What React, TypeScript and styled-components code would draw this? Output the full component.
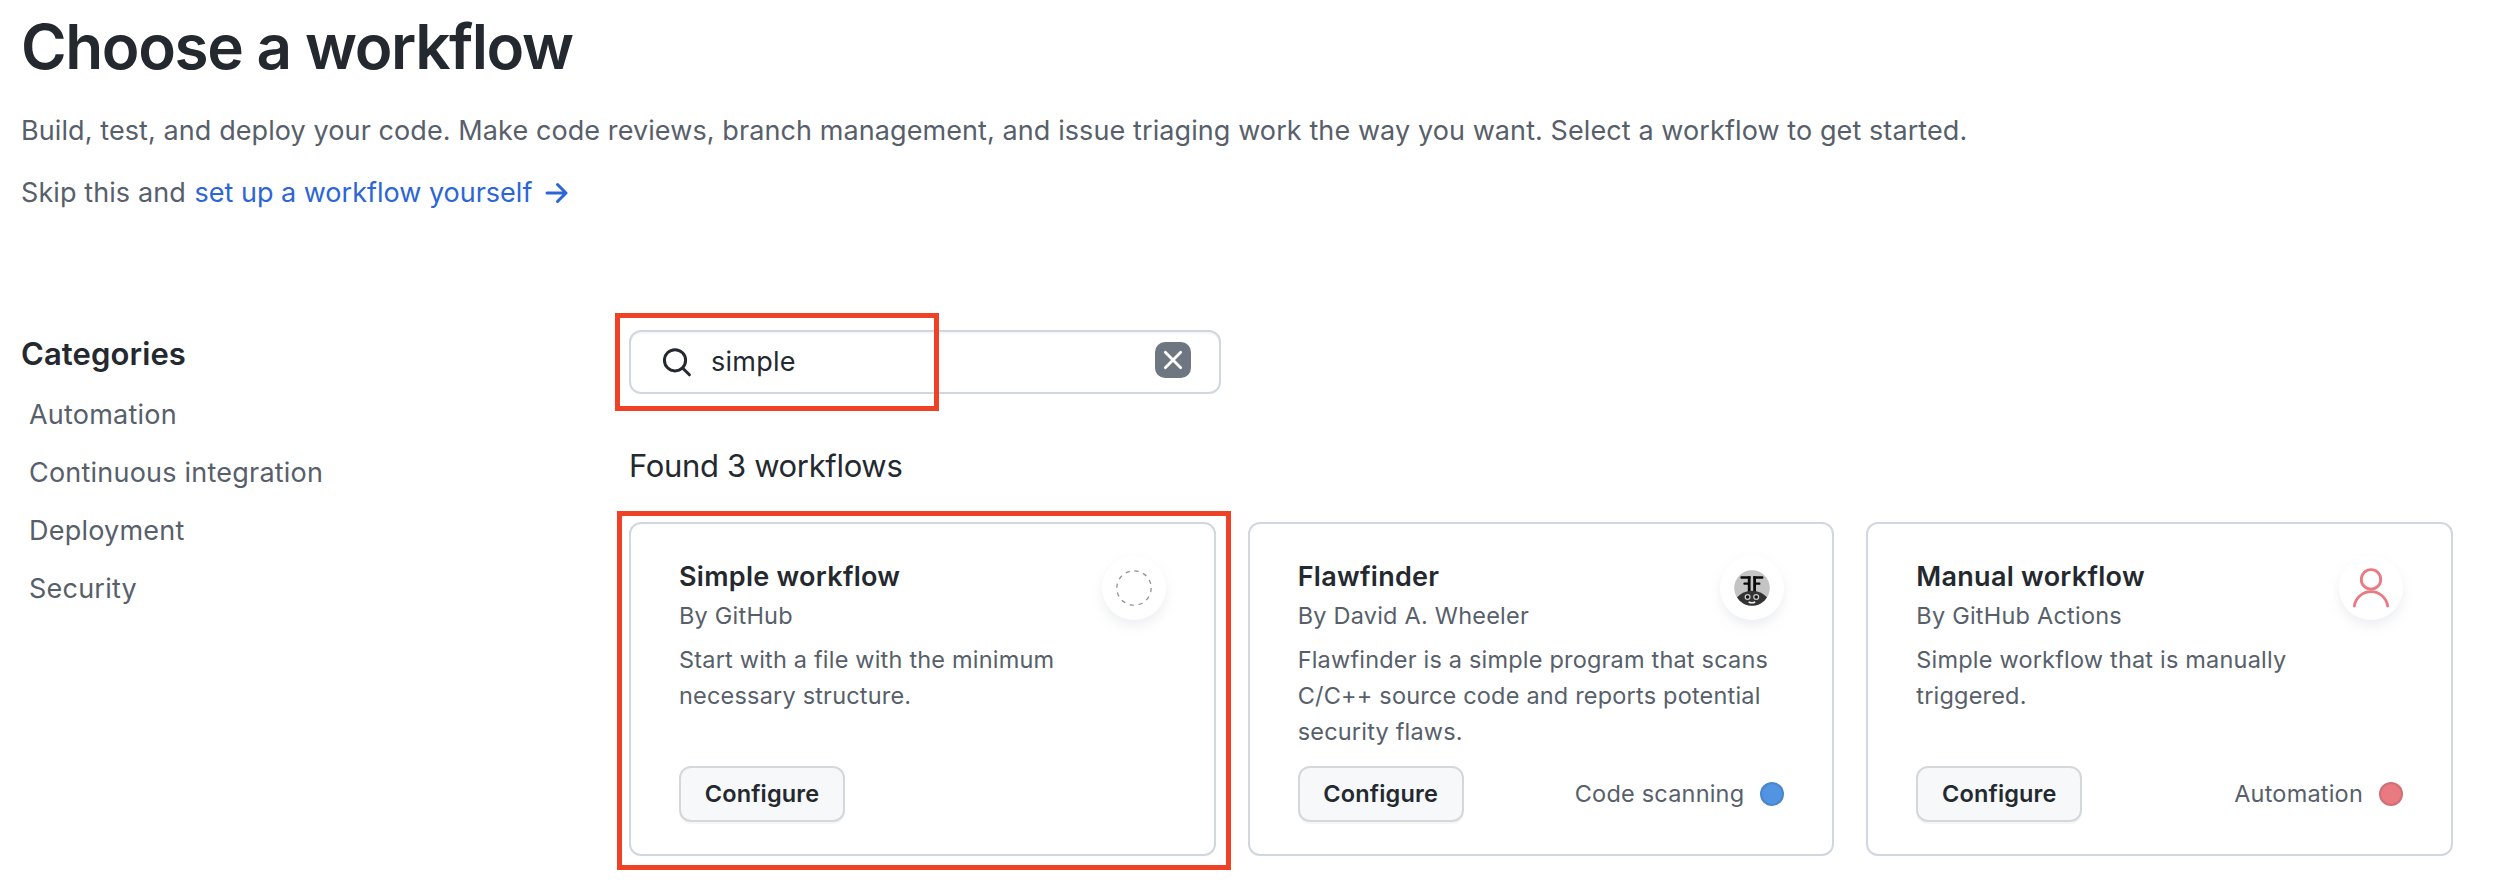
import React from "react";
import styled, { createGlobalStyle } from "styled-components";

const GlobalStyle = createGlobalStyle`
  *, *::before, *::after { box-sizing: border-box; }
  body {
    margin: 0;
    background: #ffffff;
    color: #24292f;
    font-family: Inter, "Liberation Sans", sans-serif;
  }
  h1, h2, h3, p, ul { margin: 0; padding: 0; }
`;

const Page = styled.div`
  width: 2514px;
  height: 884px;
  padding: 7px 61px 0 21px;
  overflow: hidden;
`;

const Header = styled.header`
  display: flex;
  flex-direction: column;
  height: 323px;
  color: #57606a;
`;

const PageTitle = styled.h1`
  margin-bottom: 23px;
  color: #24292f;
  font-size: 62px;
  font-weight: 600;
  line-height: 80px;
  letter-spacing: -1.41px;
`;

const Lead = styled.p`
  margin-bottom: 20px;
  font-size: 27px;
  line-height: 42px;
  letter-spacing: 0.09px;
  white-space: nowrap;
`;

const SetupLink = styled.a`
  display: inline-flex;
  align-items: center;
  gap: 13px;
  margin-left: 1px;
  color: #2c66d6;
  letter-spacing: 0;
`;

const Columns = styled.div`
  display: grid;
  grid-template-columns: 608px 1fr;
`;

const Sidebar = styled.nav`
  display: flex;
  flex-direction: column;
  gap: 8px;
`;

const SidebarTitle = styled.h2`
  font-size: 31px;
  font-weight: 600;
  line-height: 48px;
  letter-spacing: 0.1px;
`;

const CategoryList = styled.ul`
  list-style: none;
`;

const Category = styled.li`
  padding-left: 8px;
  color: #57606a;
  font-size: 27px;
  line-height: 58px;
  letter-spacing: 0.22px;
`;

const Results = styled.main`
  display: flex;
  flex-direction: column;
`;

const SearchArea = styled.div`
  position: relative;
  width: 592px;
`;

const SearchBox = styled.div`
  display: flex;
  align-items: center;
  height: 64px;
  padding: 0 28px 0 32px;
  border: 2px solid #d0d7de;
  border-radius: 12px;
  box-shadow: inset 0 2px 0 rgba(208, 215, 222, 0.2);
`;

const Query = styled.span`
  flex: 1;
  margin-left: 19px;
  font-size: 27px;
  line-height: 40px;
  letter-spacing: 0.25px;
`;

const ClearButton = styled.button`
  display: flex;
  align-items: center;
  justify-content: center;
  width: 36px;
  height: 36px;
  margin-bottom: 4px;
  padding: 0;
  border: 0;
  border-radius: 10px;
  background: #6e7781;
`;

const Highlight = styled.div<{ $top: number; $right: number; $bottom: number; $left: number }>`
  position: absolute;
  top: ${(p) => p.$top}px;
  right: ${(p) => p.$right}px;
  bottom: ${(p) => p.$bottom}px;
  left: ${(p) => p.$left}px;
  border: 5px solid #ee4126;
  pointer-events: none;
`;

const ResultCount = styled.h2`
  margin: 48px 0 32px;
  font-size: 31px;
  font-weight: 400;
  line-height: 48px;
  letter-spacing: -0.34px;
`;

const CardGrid = styled.div`
  display: grid;
  grid-template-columns: repeat(3, 1fr);
  gap: 32px;
`;

const Card = styled.article`
  position: relative;
  display: flex;
  flex-direction: column;
  height: 334px;
  padding: 32px 48px;
  border: 2px solid #d0d7de;
  border-radius: 12px;
`;

const CardHead = styled.div`
  display: flex;
  justify-content: space-between;
  height: 78px;
  margin-bottom: 8px;
`;

const CardTitle = styled.h3`
  padding-top: 1px;
  font-size: 27px;
  font-weight: 600;
  line-height: 40px;
  letter-spacing: 0.28px;
`;

const Author = styled.p`
  margin-top: 1px;
  color: #57606a;
  font-size: 23.5px;
  line-height: 36px;
  letter-spacing: 0.22px;
`;

const Avatar = styled.div`
  display: flex;
  align-items: center;
  justify-content: center;
  width: 64px;
  height: 64px;
  border-radius: 50%;
  background: #ffffff;
  box-shadow: 0 6px 12px rgba(140, 149, 159, 0.15);
`;

const Description = styled.p`
  width: 474px;
  color: #57606a;
  font-size: 23.5px;
  line-height: 36px;
  letter-spacing: 0.19px;
`;

const CardFooter = styled.div`
  display: flex;
  align-items: center;
  justify-content: space-between;
  margin-top: auto;
`;

const ConfigureButton = styled.button`
  width: 166px;
  height: 56px;
  padding: 0;
  border: 2px solid #d5d8db;
  border-radius: 12px;
  background: #f6f8fa;
  box-shadow: 0 2px 0 rgba(31, 35, 40, 0.04);
  color: #24292f;
  font-family: inherit;
  font-size: 23.5px;
  font-weight: 600;
  line-height: 36px;
  letter-spacing: 0.15px;
`;

const Tag = styled.span`
  display: flex;
  align-items: center;
  gap: 16px;
  color: #57606a;
  font-size: 23.5px;
  line-height: 36px;
  letter-spacing: 0.2px;
`;

const Dot = styled.i<{ $color: string }>`
  width: 24px;
  height: 24px;
  border: 2px solid rgba(27, 31, 36, 0.12);
  border-radius: 50%;
  background: ${(p) => p.$color};
`;

const ArrowIcon = () => (
  <svg width="23" height="22" viewBox="0 0 23 22" fill="none" stroke="currentColor" strokeWidth="3" strokeLinecap="round" strokeLinejoin="round">
    <path d="M2 11H21M12.5 2.5L21 11L12.5 19.5" />
  </svg>
);

const SearchIcon = () => (
  <svg width="29" height="29" viewBox="0 0 29 29" fill="none" stroke="#24292f" strokeWidth="3" strokeLinecap="round">
    <circle cx="12" cy="12.3" r="10.6" />
    <path d="M19.8 20.3L26.4 26.8" />
  </svg>
);

const CloseIcon = () => (
  <svg width="20" height="20" viewBox="0 0 20 20" stroke="#ffffff" strokeWidth="2.8" strokeLinecap="round">
    <path d="M2.3 2.3L17.7 17.7M17.7 2.3L2.3 17.7" />
  </svg>
);

const BlankIcon = () => (
  <svg width="36" height="36" viewBox="0 0 36 36" fill="none" stroke="#8b929a" strokeWidth="1.3">
    <circle cx="18" cy="18" r="17.2" strokeDasharray="4.2 4.8" />
  </svg>
);

const BugIcon = () => (
  <svg width="36" height="36" viewBox="0 0 36 36">
    <defs>
      <clipPath id="bug-disc">
        <circle cx="18" cy="18" r="17.8" />
      </clipPath>
    </defs>
    <g clipPath="url(#bug-disc)">
      <rect width="36" height="36" fill="#c4c4c4" />
      <g fill="#0a0a0a">
        <rect x="6.4" y="6.2" width="10.2" height="2.5" rx="1" />
        <rect x="9.4" y="12.4" width="6" height="2.3" rx="0.8" />
        <rect x="13.8" y="6.2" width="2.8" height="16" />
        <rect x="19.2" y="6.2" width="10.2" height="2.5" rx="1" />
        <rect x="20.4" y="12.4" width="6" height="2.3" rx="0.8" />
        <rect x="19.2" y="6.2" width="2.8" height="16" />
      </g>
      <path d="M3 27.2Q9 20.7 18 20.7T33 27.2L28 36H8Z" fill="#333333" />
      <g fill="#111111" stroke="#c8c8c8" strokeWidth="1.3">
        <circle cx="13.6" cy="27" r="2.4" />
        <circle cx="22.2" cy="27" r="2.4" />
      </g>
      <path d="M14.6 32Q18 33.6 21.2 32" fill="none" stroke="#eeeeee" strokeWidth="1.4" />
    </g>
  </svg>
);

const PersonIcon = () => (
  <svg width="38" height="40" viewBox="0 0 38 40" fill="none" stroke="#ea7a82" strokeWidth="2.8" strokeLinecap="round">
    <circle cx="19" cy="11.4" r="9.7" />
    <path d="M2.3 38A16.9 16.9 0 0 1 35.7 38" />
  </svg>
);

type Workflow = {
  title: string;
  author: string;
  description: string;
  icon: React.ReactNode;
  tag?: string;
  color?: string;
  highlighted?: boolean;
};

const categories = ["Automation", "Continuous integration", "Deployment", "Security"];

const workflows: Workflow[] = [
  {
    title: "Simple workflow",
    author: "By GitHub",
    description: "Start with a file with the minimum necessary structure.",
    icon: <BlankIcon />,
    highlighted: true,
  },
  {
    title: "Flawfinder",
    author: "By David A. Wheeler",
    description: "Flawfinder is a simple program that scans C/C++ source code and reports potential security flaws.",
    icon: <BugIcon />,
    tag: "Code scanning",
    color: "#5294e2",
  },
  {
    title: "Manual workflow",
    author: "By GitHub Actions",
    description: "Simple workflow that is manually triggered.",
    icon: <PersonIcon />,
    tag: "Automation",
    color: "#ea7a82",
  },
];

const WorkflowCard = ({ workflow }: { workflow: Workflow }) => (
  <Card>
    <CardHead>
      <div>
        <CardTitle>{workflow.title}</CardTitle>
        <Author>{workflow.author}</Author>
      </div>
      <Avatar>{workflow.icon}</Avatar>
    </CardHead>
    <Description>{workflow.description}</Description>
    <CardFooter>
      <ConfigureButton>Configure</ConfigureButton>
      {workflow.tag && (
        <Tag>
          {workflow.tag}
          <Dot $color={workflow.color ?? "#57606a"} />
        </Tag>
      )}
    </CardFooter>
    {workflow.highlighted && <Highlight $top={-13} $right={-17} $bottom={-16} $left={-14} />}
  </Card>
);

export default function App() {
  return (
    <Page>
      <GlobalStyle />
      <Header>
        <PageTitle>Choose a workflow</PageTitle>
        <Lead>
          Build, test, and deploy your code. Make code reviews, branch management, and issue triaging work the way you want. Select a workflow to get started.
        </Lead>
        <Lead>
          Skip this and{" "}
          <SetupLink>
            set up a workflow yourself
            <ArrowIcon />
          </SetupLink>
        </Lead>
      </Header>
      <Columns>
        <Sidebar>
          <SidebarTitle>Categories</SidebarTitle>
          <CategoryList>
            {categories.map((name) => (
              <Category key={name}>{name}</Category>
            ))}
          </CategoryList>
        </Sidebar>
        <Results>
          <SearchArea>
            <SearchBox>
              <SearchIcon />
              <Query>simple</Query>
              <ClearButton aria-label="Clear">
                <CloseIcon />
              </ClearButton>
            </SearchBox>
            <Highlight $top={-17} $right={282} $bottom={-17} $left={-14} />
          </SearchArea>
          <ResultCount>Found 3 workflows</ResultCount>
          <CardGrid>
            {workflows.map((workflow) => (
              <WorkflowCard key={workflow.title} workflow={workflow} />
            ))}
          </CardGrid>
        </Results>
      </Columns>
    </Page>
  );
}
